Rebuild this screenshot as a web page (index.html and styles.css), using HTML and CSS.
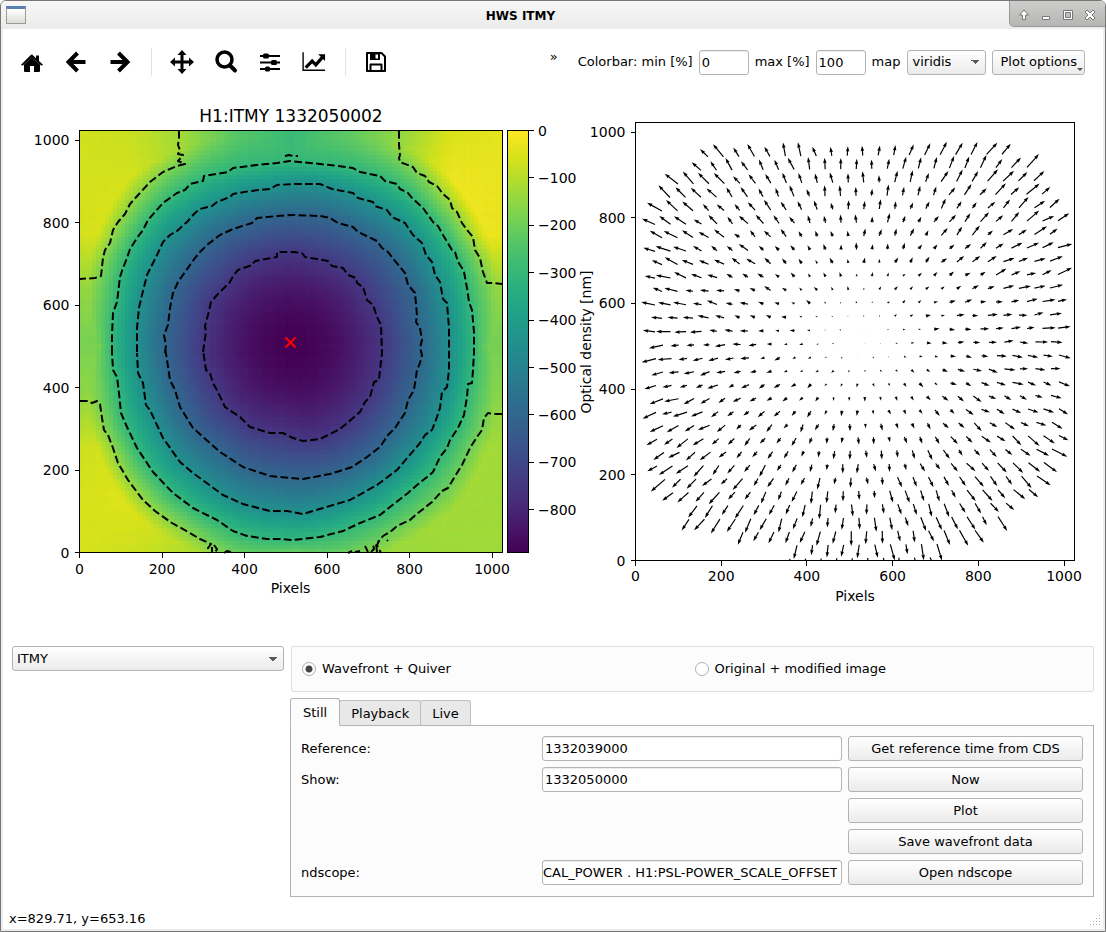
FILE: index.html
```
<!DOCTYPE html>
<html lang="en">
<head>
    <meta charset="UTF-8">
    <meta name="viewport" content="width=device-width, initial-scale=1.0">
    <title>HWS ITMY</title>
    <link rel="stylesheet" href="styles.css">
</head>
<body>
<div class="window">
    <header class="titlebar">
        <span class="app-icon"></span>
        <h1>HWS ITMY</h1>
        <div class="window-buttons">
            <button aria-label="Shade"><svg width="14" height="14" viewBox="0 0 14 14"><path d="M7 2 L11.500 7 H8.500 V11.500 H5.500 V7 H2.500 Z"/></svg></button>
            <button aria-label="Minimize"><svg width="14" height="14" viewBox="0 0 14 14"><path d="M3.500 8.500 H10.500 V11.500 H3.500 Z"/></svg></button>
            <button aria-label="Maximize"><svg width="14" height="14" viewBox="0 0 14 14"><path fill-rule="evenodd" d="M2.500 2.500 H11.500 V11.500 H2.500 Z M4.500 4.500 V9.500 H9.500 V4.500 Z"/></svg></button>
            <button aria-label="Close"><svg width="14" height="14" viewBox="0 0 14 14"><path d="M4 2 L7 5 L10 2 L12 4 L9 7 L12 10 L10 12 L7 9 L4 12 L2 10 L5 7 L2 4 Z"/></svg></button>
        </div>
    </header>

    <div class="toolbar">
        <div class="nav-tools">
            <button aria-label="Home"><svg width="24" height="24" viewBox="0 0 24 24"><path d="M12 4.500 L16 8.200 V5.500 H19 V11 L23 14.800 L21.500 15.800 L12 7.600 L2.500 15.800 L1 14.800 L10.500 5.200 Q12 4 13.500 5.200 Z"/><path d="M12 7.500 L20 14.500 V21 Q20 22 19 22 H14 V16 H10 V22 H5 Q4 22 4 21 V14.500 Z"/></svg></button>
            <button aria-label="Back"><svg width="24" height="24" viewBox="0 0 24 24"><path class="stroke" stroke-width="4" d="M13.500 3 L4.500 12 L13.500 21 M5 12 H21.500"/></svg></button>
            <button aria-label="Forward"><svg width="24" height="24" viewBox="0 0 24 24"><path class="stroke" stroke-width="4" d="M10.500 3 L19.500 12 L10.500 21 M19 12 H2.500"/></svg></button>
            <span class="separator"></span>
            <button aria-label="Pan"><svg width="24" height="24" viewBox="0 0 24 24"><path d="M12 0 L16.500 5 H13.500 V10.500 H19 V7.500 L24 12 L19 16.500 V13.500 H13.500 V19 H16.500 L12 24 L7.500 19 H10.500 V13.500 H5 V16.500 L0 12 L5 7.500 V10.500 H10.500 V5 H7.500 Z"/></svg></button>
            <button aria-label="Zoom"><svg width="24" height="24" viewBox="0 0 24 24"><circle class="stroke" cx="10.500" cy="9.500" r="7.500" stroke-width="3.500"/><path class="stroke" stroke-width="4" stroke-linecap="round" d="M16 15.500 L21 20.500"/></svg></button>
            <button aria-label="Subplots"><svg width="24" height="24" viewBox="0 0 24 24"><path class="stroke" stroke-width="2" d="M2 6 H22 M2 12.500 H22 M2 19 H22"/><rect x="5" y="3.500" width="6" height="5" rx="1.500"/><rect x="13" y="10" width="6" height="5" rx="1.500"/><rect x="7" y="16.500" width="5" height="5" rx="1.500"/></svg></button>
            <button aria-label="Edit axes"><svg width="26" height="24" viewBox="0 0 26 24"><path class="stroke" stroke-width="1.500" d="M1.200 1.500 V21 H25"/><path class="stroke" stroke-width="3.500" d="M4 18 L11 11 L15 15 L22 7"/><path d="M17.500 3.500 H25 V11 Z"/></svg></button>
            <span class="separator"></span>
            <button aria-label="Save"><svg width="24" height="24" viewBox="0 0 24 24"><path class="stroke" stroke-width="2" stroke-linejoin="round" d="M3 3 H17.500 L21 6.500 V21 H3 Z M6.500 21 V14.500 H17.500 V21"/><path fill-rule="evenodd" d="M6 3 H16 V10 H6 Z M11.500 4.500 V8.500 H14 V4.500 Z"/></svg></button>
        </div>
        <span class="more">»</span>
        <div class="colorbar-tools">
            <label for="cmin">Colorbar: min [%]</label>
            <input type="text" id="cmin" value="0">
            <label for="cmax">max [%]</label>
            <input type="text" id="cmax" value="100">
            <label for="cmap" class="map-label">map</label>
            <select id="cmap"><option>viridis</option></select>
            <button class="btn options-btn">Plot options</button>
        </div>
    </div>

    <main class="figure">
        <svg id="wavefront" viewBox="3 95 587 535" role="img" aria-label="Wavefront"></svg>
        <svg id="quiver" viewBox="590 95 513 535" role="img" aria-label="Quiver"></svg>
    </main>

    <section class="controls">
        <div class="optic">
            <select aria-label="Optic"><option>ITMY</option></select>
        </div>
        <div class="panels">
            <div class="view-mode">
                <label><input type="radio" name="view" checked>Wavefront + Quiver</label>
                <label><input type="radio" name="view">Original + modified image</label>
            </div>
            <div class="tabs" role="tablist">
                <button class="tab active" role="tab">Still</button>
                <button class="tab" role="tab">Playback</button>
                <button class="tab" role="tab">Live</button>
            </div>
            <div class="pane">
                <label for="reference">Reference:</label>
                <input type="text" id="reference" value="1332039000">
                <button class="btn">Get reference time from CDS</button>
                <label for="show">Show:</label>
                <input type="text" id="show" value="1332050000">
                <button class="btn">Now</button>
                <button class="btn last-col">Plot</button>
                <button class="btn last-col">Save wavefront data</button>
                <label for="ndscope">ndscope:</label>
                <input type="text" id="ndscope" class="scrolled" value="CAL_POWER . H1:PSL-POWER_SCALE_OFFSET">
                <button class="btn">Open ndscope</button>
            </div>
        </div>
    </section>

    <footer class="statusbar">
        <span>x=829.71, y=653.16</span>
        <svg class="grip" width="12" height="12" viewBox="0 0 12 12"><path d="M9 0h1v1h-1zM6 3h1v1h-1zM9 3h1v1h-1zM3 6h1v1h-1zM6 6h1v1h-1zM9 6h1v1h-1zM0 9h1v1h-1zM3 9h1v1h-1zM6 9h1v1h-1zM9 9h1v1h-1z"/></svg>
    </footer>
</div>
<script src="plots.js"></script>
</body>
</html>
```
FILE: styles.css
```
* {
    box-sizing: border-box;
}

body {
    margin: 0;
    font-family: "DejaVu Sans", sans-serif;
    font-size: 13px;
    line-height: 16px;
    color: #000;
    background: #fff;
}

button, input, select {
    font: inherit;
    color: inherit;
}

.window {
    display: flex;
    flex-direction: column;
    min-height: 100vh;
    padding: 0 2px;
    border: 1px solid #767676;
    border-radius: 6px 6px 0 0;
    background: #fff;
    box-shadow: inset 2px 0 #ececec, inset -2px 0 #ececec, inset 0 -2px #ececec;
}

/* Title bar */
.titlebar {
    display: flex;
    align-items: center;
    height: 28px;
    margin: 0 -2px;
    padding-left: 5px;
    background: linear-gradient(#f7f7f7, #ebebea);
    border-radius: 5px 5px 0 0;
}

.app-icon {
    width: 20px;
    height: 18px;
    border: 1px solid #9a9c98;
    border-top: 3px solid #5a7fb5;
    background: linear-gradient(#fff, #dcdcd8);
}

.titlebar h1 {
    flex: 1;
    margin: 0;
    padding: 2px 0 0 6px;
    font-size: 12px;
    text-align: center;
}

.window-buttons {
    display: flex;
    align-self: flex-start;
    gap: 8px;
    height: 26px;
    padding: 0 8px 0 7px;
    border-left: 1px solid #999;
    border-bottom: 1px solid #999;
    border-radius: 0 5px 0 5px;
    background: linear-gradient(#cdcdcb, #b5b5b3);
}

.window-buttons button {
    display: flex;
    align-items: center;
    padding: 3px 0 0;
    width: 14px;
    border: none;
    background: none;
}

.window-buttons path {
    fill: #fff;
    stroke: #777;
    stroke-width: 1;
}

/* Toolbar */
.toolbar {
    display: flex;
    align-items: center;
    height: 66px;
    padding: 0 18px 0 17px;
}

.nav-tools {
    display: flex;
    align-items: center;
    gap: 20px;
}

.nav-tools button {
    display: flex;
    width: 24px;
    padding: 0;
    border: none;
    background: none;
}

.nav-tools .stroke {
    fill: none;
    stroke: #000;
}

.separator {
    width: 1px;
    height: 28px;
    margin: 0 -2px 0 -1px;
    background: #e2e2e2;
}

.more {
    margin-left: auto;
    padding: 0 20px 10px 0;
}

.colorbar-tools {
    display: flex;
    align-items: center;
    gap: 6px;
}

.colorbar-tools input {
    width: 50px;
}

.colorbar-tools select {
    width: 79px;
}

.map-label {
    padding-right: 1px;
}

/* Form controls */
input[type="text"], select, .btn {
    height: 25px;
    border: 1px solid #b3b3b3;
    border-radius: 3px;
}

input[type="text"] {
    min-width: 0;
    padding: 0 2px;
    background: #fff;
    box-shadow: inset 0 1px #ececec;
}

input.scrolled {
    padding: 0 4px 0 0;
    text-align: right;
}

.btn {
    padding: 0 7px;
    background: linear-gradient(#fff, #ebebeb);
}

select {
    appearance: none;
    padding: 0 4px;
    background: conic-gradient(from 315deg at 50% 100%, #5a5a5a 90deg, transparent 0) right 6px center / 8px 4px no-repeat, linear-gradient(#fff, #ebebeb);
}

.options-btn {
    position: relative;
}

.options-btn::after {
    content: "";
    position: absolute;
    right: 1px;
    bottom: 3px;
    border: 3px solid transparent;
    border-top: 3px solid #555;
    border-bottom: none;
}

/* Figure */
.figure {
    display: grid;
    grid-template-columns: 587fr 513fr;
}

.figure svg {
    display: block;
    width: 100%;
    overflow: visible;
}

.figure text {
    font-size: 14px;
}

.figure .plot-title {
    font-size: 17px;
}

.axis {
    fill: none;
    stroke: #000;
    stroke-width: 1;
    shape-rendering: crispEdges;
}

.contour {
    fill: none;
    stroke: #000;
    stroke-width: 2;
    stroke-dasharray: 7.7 3.3;
    stroke-linejoin: round;
}

.marker {
    stroke: #f00;
    stroke-width: 2;
}

/* Controls */
.controls {
    display: grid;
    grid-template-columns: 272px 1fr;
    gap: 6px;
    padding: 16px 9px 0;
}

.optic select {
    width: 100%;
}

.view-mode {
    display: grid;
    grid-template-columns: 1fr 1fr;
    align-items: center;
    column-gap: 4px;
    height: 46px;
    margin-left: 1px;
    padding: 0 10px;
    border: 1px solid #dedede;
    border-radius: 2px;
    background: #fcfcfc;
}

.view-mode label {
    display: flex;
    align-items: center;
    gap: 6px;
}

.view-mode input {
    appearance: none;
    width: 14px;
    height: 14px;
    margin: 0;
    border: 1px solid #b0b0b0;
    border-radius: 50%;
    background: #fff;
}

.view-mode input:checked {
    background: radial-gradient(circle, #444 3px, #fff 4px);
}

.tabs {
    display: flex;
    align-items: flex-end;
    height: 28px;
    margin-top: 6px;
}

.tab {
    height: 26px;
    margin-left: -1px;
    padding: 2px 11px 0;
    border: 1px solid #c0c0c0;
    border-bottom-color: #b3b3b3;
    border-radius: 3px 3px 0 0;
    background: #e8e8e8;
}

.tab.active {
    height: 28px;
    margin-left: 0;
    padding: 2px 12px 0;
    border-color: #b3b3b3;
    border-bottom-color: #fcfcfc;
    background: #fcfcfc;
    z-index: 1;
}

.pane {
    display: grid;
    grid-template-columns: 235fr 300fr 235fr;
    grid-auto-rows: 25px;
    align-items: center;
    gap: 6px;
    margin-top: -1px;
    padding: 10px 10px 11px;
    border: 1px solid #b3b3b3;
    background: #fcfcfc;
}

.last-col {
    grid-column: 3;
}

/* Status bar */
.statusbar {
    display: flex;
    align-items: flex-end;
    justify-content: space-between;
    margin-top: auto;
    padding: 0 1px 4px 6px;
}

.grip {
    fill: #aaa;
}
```
FILE: plots.js
```
const NS = 'http://www.w3.org/2000/svg';

// viridis, dark to bright
const VIRIDIS = [
    [68, 1, 84], [72, 24, 106], [71, 45, 123], [66, 64, 134], [59, 82, 139], [51, 99, 141],
    [44, 114, 142], [38, 130, 142], [33, 145, 140], [31, 160, 136], [40, 174, 128],
    [63, 188, 115], [94, 201, 98], [132, 212, 75], [173, 220, 48], [216, 226, 25], [253, 231, 37]
];

// Closed contours, -300 nm to -750 nm
const CONTOURS = [
    [-750, '203,352 206,332 205,326 208,315 211,302 217,295 230,282 233,276 238,270 252,265 255,261 277,257 277,252 293,252 302,253 305,257 317,259 328,261 332,266 343,268 348,275 356,278 357,283 363,287 367,300 373,305 377,317 381,325 382,353 380,370 379,380 374,382 370,397 365,402 360,412 340,429 320,439 303,441 293,438 283,433 270,433 250,427 240,417 225,407 218,392 213,383 210,373 206,370 203,350'],
    [-600, '165,353 166,345 164,335 168,325 170,308 173,293 178,282 185,272 195,258 200,252 207,245 220,235 233,229 252,223 257,218 277,216 293,215 320,216 330,218 338,223 353,227 358,232 377,241 382,248 388,252 395,261 405,273 408,285 415,293 417,315 416,322 420,328 422,340 420,348 422,355 420,363 417,370 414,390 408,400 405,413 395,428 388,435 380,447 367,457 352,467 330,474 303,479 280,477 270,476 243,467 220,452 193,428 180,407 175,390 170,380 167,360 165,347'],
    [-450, '137,352 137,328 139,308 142,295 147,275 152,265 157,255 163,242 170,235 177,231 187,222 195,213 200,209 212,206 217,202 230,197 233,194 250,191 270,189 277,185 293,184 320,184 332,189 353,193 358,198 373,202 375,206 387,210 392,217 405,223 413,235 422,243 426,255 432,262 435,275 440,282 443,299 447,303 449,328 449,355 449,370 447,387 442,392 440,408 437,417 432,430 425,435 420,443 408,457 397,470 377,485 350,500 323,508 303,514 287,511 270,511 243,504 223,495 193,473 180,462 163,438 150,410 146,405 143,383 138,373 137,353'],
    [-300, '112,353 112,335 113,313 117,302 120,277 123,268 127,258 130,249 137,238 143,230 148,220 163,203 177,193 185,190 190,184 203,181 204,176 228,172 233,168 257,165 277,163 290,161 310,163 330,165 353,168 360,172 380,176 385,181 397,184 400,189 408,193 412,198 423,208 433,222 438,226 443,235 452,250 455,252 458,262 462,268 464,272 467,288 469,302 472,310 474,332 474,353 473,370 472,383 468,384 467,397 464,415 458,428 450,440 447,448 440,457 433,472 427,477 417,485 408,493 395,503 380,515 360,523 343,531 320,537 293,540 280,539 267,539 247,536 233,531 217,520 193,508 173,493 153,472 137,448 127,427 121,413 119,393 117,377 113,370 112,353']
];

// Pieces of the -150 nm contour, cut by the edges of the image
const OPEN_CONTOURS = [
    '179,131 179,138 178,145 180,150 178,154 183,155 178,161 185,164 177,166 163,172 150,182 139,194 130,204 125,214 118,222 113,230 110,243 105,250 103,258 101,276 95,278 80,279',
    '399,131 399,145 400,155 399,158 400,162 413,167 417,173 425,176 429,182 437,186 443,194 450,200 452,208 457,212 462,223 467,230 473,237 475,250 480,258 483,272 487,283 492,283 502,284',
    '80,401 88,401 92,403 97,401 100,404 102,418 104,430 108,435 113,448 118,463 128,480 143,500 155,511 172,523 190,533 200,539 211,544 208,548 209,553',
    '212,547 212,553', '214,545 217,549 215,553', '224,553 227,551 231,552',
    '502,414 493,414 488,413 484,418 482,430 477,437 470,448 462,465 457,473 448,488 442,491 432,502 418,513 410,520 397,526 390,532 383,536 379,541 377,545 381,553',
    '348,553 352,551', '355,552 360,551', '365,546 368,552', '371,552 374,549 373,544', '377,552 376,543 379,541', '387,540 388,541',
    '285,156 289,155 293,156 298,156'
];

// Background level around the aperture, 9 x 9 samples
const BACKGROUND = [
    [-65, -78, -140, -240, -290, -230, -160, -55, -35],
    [-62, -60, -110, -245, -290, -230, -110, -22, -32],
    [-65, -35, -50, -220, -290, -220, -30, -5, -35],
    [-150, -120, -150, -200, -250, -200, -150, -110, -150],
    [-185, -185, -200, -200, -200, -200, -200, -190, -190],
    [-155, -140, -160, -200, -200, -200, -170, -140, -165],
    [-75, -40, -40, -150, -200, -150, -110, -110, -130],
    [-58, -45, -60, -150, -215, -185, -125, -125, -130],
    [-58, -70, -105, -165, -195, -180, -135, -132, -130]
];

// First and last arrow of each row
const ROWS = [
    [708, 1002], [701, 1027], [678, 1034], [670, 1042], [662, 1050], [655, 1058], [662, 1050], [655, 1058],
    [662, 1050], [655, 1058], [662, 1050], [655, 1058], [662, 1050], [655, 1058], [663, 1051], [656, 1059],
    [663, 1051], [656, 1059], [663, 1051], [656, 1059], [663, 1052], [657, 1059], [664, 1052], [657, 1044],
    [665, 1037], [673, 1029], [697, 1006], [689, 998], [743, 975], [797, 937], [790, 930]
];

function add(parent, tag, attrs, text) {
    const el = document.createElementNS(NS, tag);
    for (const key in attrs) el.setAttribute(key, attrs[key]);
    if (text !== undefined) el.textContent = text;
    parent.appendChild(el);
    return el;
}

function color(value) {
    const t = Math.min(1, Math.max(0, 1 + value / 892)) * (VIRIDIS.length - 1);
    const i = Math.min(VIRIDIS.length - 2, Math.floor(t));
    const c = VIRIDIS[i].map((v, k) => Math.round(v + (VIRIDIS[i + 1][k] - v) * (t - i)));
    return `rgb(${c.join(',')})`;
}

// Repeatable noise in 0..1
function noise(a, b) {
    const s = Math.sin(a * 127.1 + b * 311.7) * 43758.5453;
    return s - Math.floor(s);
}

const CX = 293;
const CY = 346;
const STEPS = 72;

// Radius of a closed contour for every 5 degrees
function radii(points) {
    const polar = points.split(' ').map(p => {
        const [x, y] = p.split(',').map(Number);
        return { a: Math.atan2(y - CY, x - CX), r: Math.hypot(x - CX, y - CY) };
    });
    const table = [];
    for (let i = 0; i < STEPS; i++) {
        const a = i / STEPS * 2 * Math.PI - Math.PI;
        let sum = 0, weights = 0;
        for (const p of polar) {
            let d = Math.abs(p.a - a);
            d = Math.min(d, 2 * Math.PI - d);
            const w = Math.exp(-d * d / 0.012);
            sum += w * p.r;
            weights += w;
        }
        table.push(sum / weights);
    }
    return table;
}

const TABLES = CONTOURS.map(([level, points]) => ({ level, table: radii(points) }));

function radiusAt(table, angle) {
    const t = (angle + Math.PI) / (2 * Math.PI) * STEPS;
    const i = Math.floor(t);
    const a = table[i % STEPS];
    return a + (table[(i + 1) % STEPS] - a) * (t - i);
}

function background(u, v) {
    const x = Math.min(7.999, u * 8), y = Math.min(7.999, v * 8);
    const i = Math.floor(x), j = Math.floor(y);
    const top = BACKGROUND[j][i] + (BACKGROUND[j][i + 1] - BACKGROUND[j][i]) * (x - i);
    const bottom = BACKGROUND[j + 1][i] + (BACKGROUND[j + 1][i + 1] - BACKGROUND[j + 1][i]) * (x - i);
    return top + (bottom - top) * (y - j);
}

function field(x, y) {
    const r = Math.hypot(x - CX, y - CY);
    const angle = Math.atan2(y - CY, x - CX);
    let prevR = 0, prevLevel = -892;
    for (const { level, table } of TABLES) {
        const edge = radiusAt(table, angle);
        if (r < edge) {
            const t = (r - prevR) / (edge - prevR);
            return prevLevel + (level - prevLevel) * (prevR === 0 ? t * t : t);
        }
        prevR = edge;
        prevLevel = level;
    }
    // the rim is steep beside the aperture and wide towards the corners
    const rim = 14 + 27 * Math.abs(Math.sin(2 * angle));
    const t = Math.min(1, (r - prevR) / rim);
    return -300 + (background((x - 80) / 423, (y - 130) / 423) + 300) * t;
}

function ticks(svg, o) {
    for (let i = 0; i <= 5; i++) {
        const x = o.x + o.step * i, y = o.y - o.step * i;
        add(svg, 'path', { class: 'axis', d: `M${x} ${o.y}v5M${o.x} ${y}h-5` });
        add(svg, 'text', { x, y: o.labels, 'text-anchor': 'middle' }, i * 200);
        add(svg, 'text', { x: o.x - 10, y: y + 5, 'text-anchor': 'end' }, i * 200);
    }
}

function drawWavefront() {
    const svg = document.getElementById('wavefront');
    const cells = 103, size = 423 / cells;
    const image = add(svg, 'g', { 'shape-rendering': 'crispEdges' });
    for (let j = 0; j < cells; j++) {
        for (let i = 0; i < cells; i++) {
            const x = 80 + i * size, y = 130 + j * size;
            const ripple = (i % 3 === 1 ? 2 : -1) + (j % 3 === 1 ? 2 : -1);
            add(image, 'rect', { x, y, width: size, height: size, fill: color(field(x + size / 2, y + size / 2) + ripple) });
        }
    }
    for (const [, points] of CONTOURS) add(svg, 'polyline', { class: 'contour', points });
    for (const points of OPEN_CONTOURS) add(svg, 'polyline', { class: 'contour', points });
    add(svg, 'path', { class: 'marker', d: 'M285.5 337.500l10 10m0 -10l-10 10' });
    add(svg, 'rect', { class: 'axis', x: 79.5, y: 130.5, width: 423, height: 422 });
    ticks(svg, { x: 79.5, y: 552.5, step: 82.5, labels: 574 });
    add(svg, 'text', { x: 290.5, y: 593, 'text-anchor': 'middle' }, 'Pixels');
    add(svg, 'text', { class: 'plot-title', x: 291, y: 122, 'text-anchor': 'middle' }, 'H1:ITMY 1332050002');

    const gradient = add(add(svg, 'defs', {}), 'linearGradient', { id: 'viridis', x1: 0, y1: 1, x2: 0, y2: 0 });
    VIRIDIS.forEach((c, i) => add(gradient, 'stop', { offset: i / (VIRIDIS.length - 1), 'stop-color': `rgb(${c})` }));
    add(svg, 'rect', { x: 507.5, y: 130.5, width: 21, height: 422, fill: 'url(#viridis)' });
    add(svg, 'rect', { class: 'axis', x: 507.5, y: 130.5, width: 21, height: 422 });
    for (let i = 0; i <= 8; i++) {
        const y = 130.5 + 47.4 * i;
        add(svg, 'path', { class: 'axis', d: `M528.5 ${y}h5` });
        add(svg, 'text', { x: 538, y: y + 5 }, i ? '\u2212' + i * 100 : '0');
    }
    add(svg, 'text', { transform: 'translate(591 342) rotate(-90)', 'text-anchor': 'middle' }, 'Optical density [nm]');
}

// Filled arrow with a head of 3 x 5 shaft widths; short ones shrink as a whole
function arrow(x, y, dx, dy) {
    const length = Math.hypot(dx, dy);
    const k = Math.min(1, length / 5.5);
    const w = 0.6 * k, head = 5.5 * k, half = 1.8 * k;
    const ux = dx / length, uy = dy / length;
    const at = (along, side) => (x + ux * along - uy * side).toFixed(2) + ' ' + (y + uy * along + ux * side).toFixed(2);
    const neck = length - head * 0.9;
    return 'M' + [at(0, -w), at(neck, -w), at(length - head, -half), at(length, 0), at(length - head, half), at(neck, w), at(0, w)].join('L') + 'Z';
}

function drawQuiver() {
    const svg = document.getElementById('quiver');
    const clip = add(add(svg, 'defs', {}), 'clipPath', { id: 'axes' });
    add(clip, 'rect', { x: 635, y: 122, width: 440, height: 439 });
    let d = '';
    ROWS.forEach(([from, to], i) => {
        const count = Math.round((to - from) / 15.65);
        for (let k = 0; k <= count; k++) {
            const x = from + (to - from) * k / count;
            const y = 156.9 + 13.42 * i - 0.009 * (x - 708);
            const dx = x - 860, dy = y - 336;
            const gain = 0.047 + 0.034 * noise(i, k);
            const turn = (noise(k + 7, i + 3) - 0.5) * 0.3;
            const jx = (noise(i + 40, k) - 0.5) * 1.6, jy = (noise(i, k + 40) - 0.5) * 1.6;
            d += arrow(x, y, (dx - dy * turn) * gain * 0.94 + jx, (dy + dx * turn) * gain + jy);
        }
    });
    add(svg, 'path', { d, 'clip-path': 'url(#axes)' });
    add(svg, 'rect', { class: 'axis', x: 635.5, y: 122.5, width: 439, height: 438 });
    ticks(svg, { x: 635.5, y: 560.5, step: 85.7, labels: 581 });
    add(svg, 'text', { x: 855, y: 601, 'text-anchor': 'middle' }, 'Pixels');
}

drawWavefront();
drawQuiver();
```
